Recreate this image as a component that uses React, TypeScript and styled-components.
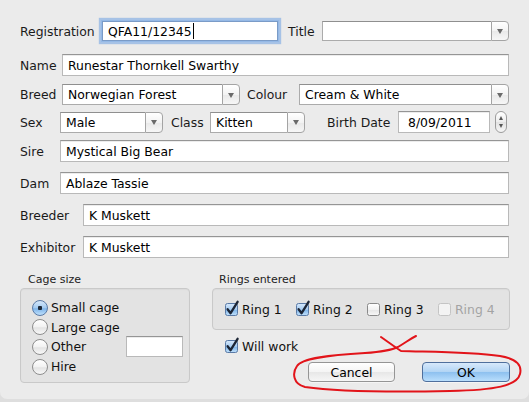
import React from "react";
import styled, { createGlobalStyle } from "styled-components";

const Global = createGlobalStyle`
  html, body { margin: 0; padding: 0; background: #dedede; }
  body { font-family: "DejaVu Sans", "Liberation Sans", sans-serif; }
`;

const Dialog = styled.div`
  position: relative;
  width: 529px;
  height: 399px;
  box-sizing: border-box;
  padding: 20px 20px 0 20px;
  background: #ebebeb;
  border-radius: 0 0 7px 7px;
  font-size: 12.4px;
  color: #111;
`;

const Row = styled.div<{ $top: number; $h?: number }>`
  display: flex;
  align-items: center;
  margin-top: ${(p) => p.$top}px;
  height: ${(p) => p.$h ?? 22}px;
`;

const Label = styled.div<{ $w: number; $ml?: number }>`
  flex: none;
  width: ${(p) => p.$w}px;
  margin-left: ${(p) => p.$ml ?? 0}px;
  white-space: nowrap;
  color: #1a1a1a;
`;

const Field = styled.div<{ $w?: number; $h?: number; $pl?: number }>`
  box-sizing: border-box;
  flex: ${(p) => (p.$w ? "none" : "1")};
  width: ${(p) => (p.$w ? `${p.$w}px` : "auto")};
  height: ${(p) => p.$h ?? 22}px;
  background: #fff;
  border: 1px solid #b9b9b9;
  border-top-color: #959595;
  box-shadow: inset 0 1px 0 #ececec;
  padding-left: ${(p) => p.$pl ?? 5}px;
  display: flex;
  align-items: center;
  white-space: nowrap;
  color: #000;
`;

const FocusField = styled(Field)`
  margin-left: 2px;
  border-color: #7a9bc7;
  box-shadow: 0 0 0 1px #95b9e6, 0 0 1px 3px rgba(110, 160, 225, 0.55);
`;

const Caret = styled.span`
  display: inline-block;
  width: 1px;
  height: 16px;
  background: #000;
  margin-left: 1px;
`;

const ComboWrap = styled.div<{ $w?: number; $h?: number }>`
  flex: ${(p) => (p.$w ? "none" : "1")};
  width: ${(p) => (p.$w ? `${p.$w}px` : "auto")};
  height: ${(p) => p.$h ?? 21}px;
  display: flex;
  box-sizing: border-box;
`;

const ComboValue = styled.div`
  flex: 1;
  box-sizing: border-box;
  background: #fff;
  border: 1px solid #ababab;
  border-right: none;
  border-top-color: #8f8f8f;
  padding-left: 5px;
  display: flex;
  align-items: center;
  white-space: nowrap;
  color: #000;
`;

const ComboArrow = styled.div`
  flex: none;
  width: 18px;
  box-sizing: border-box;
  border: 1px solid #a4a4a4;
  border-radius: 0 4px 4px 0;
  background: linear-gradient(#ffffff, #f3f3f3 50%, #e9e9e9 51%, #f7f7f7);
  display: flex;
  align-items: center;
  justify-content: center;
  &::after {
    content: "";
    width: 0;
    height: 0;
    border-left: 3.5px solid transparent;
    border-right: 3.5px solid transparent;
    border-top: 5px solid #6a6a6a;
    margin-top: 1px;
  }
`;

const Combo = ({ w, h, value }: { w?: number; h?: number; value: string }) => (
  <ComboWrap $w={w} $h={h}>
    <ComboValue>{value}</ComboValue>
    <ComboArrow />
  </ComboWrap>
);

const Stepper = styled.div`
  flex: none;
  margin-left: 5px;
  width: 12px;
  height: 22px;
  box-sizing: border-box;
  border: 1px solid #9c9c9c;
  border-radius: 6px;
  background: linear-gradient(#ffffff, #ededed 50%, #e2e2e2 51%, #f6f6f6);
  display: flex;
  flex-direction: column;
  align-items: center;
  justify-content: center;
  gap: 4px;
  &::before {
    content: "";
    border-left: 2.5px solid transparent;
    border-right: 2.5px solid transparent;
    border-bottom: 4px solid #555;
  }
  &::after {
    content: "";
    border-left: 2.5px solid transparent;
    border-right: 2.5px solid transparent;
    border-top: 4px solid #555;
  }
`;

const Bottom = styled.div`
  display: flex;
  gap: 22px;
  margin-top: 14px;
`;

const Column = styled.div<{ $w?: number }>`
  flex: ${(p) => (p.$w ? "none" : "1")};
  width: ${(p) => (p.$w ? `${p.$w}px` : "auto")};
  display: flex;
  flex-direction: column;
`;

const GroupTitle = styled.div<{ $pl: number }>`
  height: 16px;
  font-size: 11px;
  line-height: 16px;
  padding-left: ${(p) => p.$pl}px;
  color: #222;
`;

const GroupBox = styled.div<{ $h: number }>`
  box-sizing: border-box;
  height: ${(p) => p.$h}px;
  background: #e3e3e3;
  border: 1px solid #c9c9c9;
  border-radius: 4px;
  box-shadow: inset 0 1px 1px rgba(0, 0, 0, 0.04);
`;

const RadioList = styled.div`
  display: flex;
  flex-direction: column;
  padding: 9px 6px 0 11px;
`;

const OptionRow = styled.div`
  display: flex;
  align-items: center;
  height: 19.6px;
`;

const RadioDot = styled.span<{ $on?: boolean }>`
  flex: none;
  box-sizing: border-box;
  width: 16px;
  height: 16px;
  border-radius: 50%;
  border: 1px solid ${(p) => (p.$on ? "#5a7aa6" : "#8d8d8d")};
  background: ${(p) =>
    p.$on
      ? "radial-gradient(circle at 50% 50%, #1f2a3a 0 2px, transparent 2.5px), linear-gradient(#d6e8fa, #a3caf0 50%, #7fb5ea 55%, #bfe0fb)"
      : "linear-gradient(#ffffff, #f2f2f2 50%, #e4e4e4 55%, #f8f8f8)"};
  margin-right: 3px;
`;

const OptText = styled.span<{ $dim?: boolean }>`
  color: ${(p) => (p.$dim ? "#a3a3a3" : "#111")};
  white-space: nowrap;
`;

const SmallField = styled(Field)`
  margin-left: auto;
`;

const RingRow = styled.div`
  display: flex;
  align-items: center;
  height: 100%;
  padding-left: 12px;
`;

const RingItem = styled.div`
  width: 71px;
  display: flex;
  align-items: center;
`;

const CheckSvg = styled.svg`
  flex: none;
  overflow: visible;
  margin-right: 4px;
`;

const Check = ({ on, dim }: { on?: boolean; dim?: boolean }) => (
  <CheckSvg width="13" height="13" viewBox="0 0 13 13">
    <defs>
      <linearGradient id="cbOn" x1="0" y1="0" x2="0" y2="1">
        <stop offset="0" stopColor="#d8e9fb" />
        <stop offset="0.5" stopColor="#a6ccf1" />
        <stop offset="0.55" stopColor="#82b7ea" />
        <stop offset="1" stopColor="#c2e1fb" />
      </linearGradient>
      <linearGradient id="cbOff" x1="0" y1="0" x2="0" y2="1">
        <stop offset="0" stopColor="#ffffff" />
        <stop offset="0.5" stopColor="#f2f2f2" />
        <stop offset="0.55" stopColor="#e6e6e6" />
        <stop offset="1" stopColor="#f8f8f8" />
      </linearGradient>
    </defs>
    <rect
      x="0.5"
      y="0.5"
      width="12"
      height="12"
      rx="2"
      fill={on ? "url(#cbOn)" : dim ? "#f3f3f3" : "url(#cbOff)"}
      stroke={on ? "#5a7aa6" : dim ? "#c4c4c4" : "#8a8a8a"}
    />
    {on && (
      <path
        d="M2.6 6.2 L5.6 10.2 L12.6 -1.2"
        fill="none"
        stroke="#1c2535"
        strokeWidth="2.3"
        strokeLinecap="round"
        strokeLinejoin="round"
      />
    )}
  </CheckSvg>
);

const WillRow = styled.div`
  display: flex;
  align-items: center;
  height: 16px;
  margin-top: 8px;
  padding-left: 13px;
`;

const Buttons = styled.div`
  display: flex;
  justify-content: flex-end;
  gap: 27px;
  margin-top: 8px;
`;

const Button = styled.div<{ $primary?: boolean; $w: number }>`
  box-sizing: border-box;
  width: ${(p) => p.$w}px;
  height: 20px;
  border-radius: 4px;
  border: 1px solid ${(p) => (p.$primary ? "#4f6f9c" : "#959595")};
  background: ${(p) =>
    p.$primary
      ? "linear-gradient(#d7e9fb, #b1d4f4 50%, #8dc0ef 51%, #b9defc)"
      : "linear-gradient(#ffffff, #f4f4f4 50%, #e7e7e7 51%, #f6f6f6)"};
  box-shadow: 0 1px 0 rgba(255, 255, 255, 0.5);
  display: flex;
  align-items: center;
  justify-content: center;
  color: #000;
`;

const Scribble = styled.svg`
  position: absolute;
  left: 0;
  top: 0;
  pointer-events: none;
  overflow: visible;
`;

export default function App() {
  return (
    <>
      <Global />
      <Dialog>
        <Row $top={0}>
          <Label $w={80}>Registration</Label>
          <FocusField $w={176} $h={20}>
            QFA11/12345
            <Caret />
          </FocusField>
          <Label $w={34} $ml={10}>
            Title
          </Label>
          <Combo h={20} value="" />
        </Row>
        <Row $top={12}>
          <Label $w={42}>Name</Label>
          <Field>Runestar Thornkell Swarthy</Field>
        </Row>
        <Row $top={8} $h={21}>
          <Label $w={42}>Breed</Label>
          <Combo w={178} value="Norwegian Forest" />
          <Label $w={52} $ml={7}>
            Colour
          </Label>
          <Combo value="Cream & White" />
        </Row>
        <Row $top={6}>
          <Label $w={40}>Sex</Label>
          <Combo w={103} value="Male" />
          <Label $w={39} $ml={8}>
            Class
          </Label>
          <Combo w={95} value="Kitten" />
          <Label $w={71} $ml={22}>
            Birth Date
          </Label>
          <Field $w={92} $pl={9}>
            8/09/2011
          </Field>
          <Stepper />
        </Row>
        <Row $top={7}>
          <Label $w={40}>Sire</Label>
          <Field>Mystical Big Bear</Field>
        </Row>
        <Row $top={10}>
          <Label $w={40}>Dam</Label>
          <Field>Ablaze Tassie</Field>
        </Row>
        <Row $top={10}>
          <Label $w={63}>Breeder</Label>
          <Field>K Muskett</Field>
        </Row>
        <Row $top={10}>
          <Label $w={63}>Exhibitor</Label>
          <Field>K Muskett</Field>
        </Row>

        <Bottom>
          <Column $w={170}>
            <GroupTitle $pl={8}>Cage size</GroupTitle>
            <GroupBox $h={95}>
              <RadioList>
                <OptionRow>
                  <RadioDot $on />
                  <OptText>Small cage</OptText>
                </OptionRow>
                <OptionRow>
                  <RadioDot />
                  <OptText>Large cage</OptText>
                </OptionRow>
                <OptionRow>
                  <RadioDot />
                  <OptText>Other</OptText>
                  <SmallField $w={57} $h={21} />
                </OptionRow>
                <OptionRow>
                  <RadioDot />
                  <OptText>Hire</OptText>
                </OptionRow>
              </RadioList>
            </GroupBox>
          </Column>
          <Column>
            <GroupTitle $pl={7}>Rings entered</GroupTitle>
            <GroupBox $h={42}>
              <RingRow>
                <RingItem>
                  <Check on />
                  <OptText>Ring 1</OptText>
                </RingItem>
                <RingItem>
                  <Check on />
                  <OptText>Ring 2</OptText>
                </RingItem>
                <RingItem>
                  <Check />
                  <OptText>Ring 3</OptText>
                </RingItem>
                <RingItem>
                  <Check dim />
                  <OptText $dim>Ring 4</OptText>
                </RingItem>
              </RingRow>
            </GroupBox>
            <WillRow>
              <Check on />
              <OptText>Will work</OptText>
            </WillRow>
            <Buttons>
              <Button $w={87}>Cancel</Button>
              <Button $w={88} $primary>
                OK
              </Button>
            </Buttons>
          </Column>
        </Bottom>

        <Scribble width="529" height="402" viewBox="0 0 529 402">
          <path
            d="M381 337 C388 342 395 347 401 351 C430 352 470 352 500 356 C518 359 522 366 520 374 C517 386 495 390 450 391 C400 392 340 392 305 387 C293 384 292 373 297 366 C302 358 330 355 365 353 C380 352 392 350 398 347 C405 343 410 339 416 336"
            fill="none"
            stroke="#e2141a"
            strokeWidth="2"
            strokeLinecap="round"
            strokeLinejoin="round"
          />
        </Scribble>
      </Dialog>
    </>
  );
}
